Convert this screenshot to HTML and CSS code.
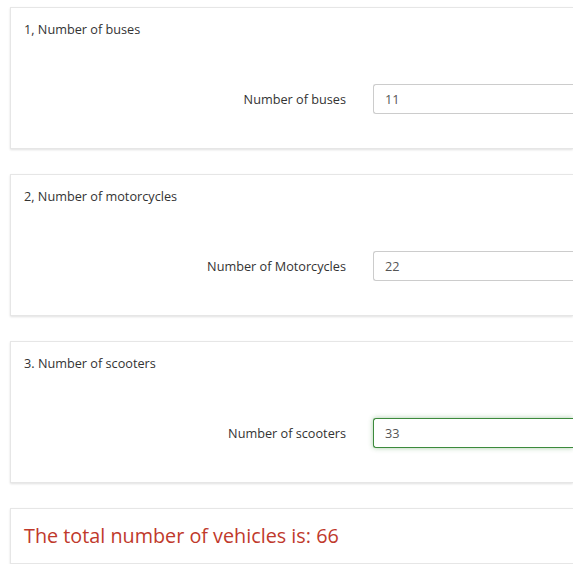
FILE: index.html
```html
<!DOCTYPE html>
<html lang="en">
<head>
  <meta charset="UTF-8" />
  <meta name="viewport" content="width=device-width, initial-scale=1.0"/>
  <title>Vehicle Count</title>
  <link rel="stylesheet" href="styles.css">
</head>
<body>
  <main class="page">
    <section class="card">
      <h4 class="card-title">1, Number of buses</h4>
      <div class="field">
        <label for="buses">Number of buses</label>
        <input id="buses" type="text" value="11" />
      </div>
    </section>

    <section class="card">
      <h4 class="card-title">2, Number of motorcycles</h4>
      <div class="field">
        <label for="motorcycles">Number of Motorcycles</label>
        <input id="motorcycles" type="text" value="22" />
      </div>
    </section>

    <section class="card">
      <h4 class="card-title">3. Number of scooters</h4>
      <div class="field">
        <label for="scooters">Number of scooters</label>
        <input id="scooters" class="valid" type="text" value="33" />
      </div>
    </section>

    <section class="card total">
      The total number of vehicles is: <span id="total">66</span>
    </section>
  </main>
</body>
</html>
```

FILE: styles.css
```css
body {
  font-family: 'Open Sans', sans-serif;
  margin: 0;
  background: #fff;
  color: #333;
}
/* cards run on past the right edge of the window */
.page {
  padding: 7px 0 0 10px;
  display: flex;
  flex-direction: column;
  gap: 25px;
}
.card {
  background: #fff;
  border: 1px solid #e6e6e6;
  border-right: none;
  box-shadow: 0 1px 2px rgba(0,0,0,0.12);
  padding: 12px 0 34px 13px;
}
.card-title {
  margin: 0;
  font-size: 12.7px;
  font-weight: normal;
  line-height: 18px;
}
.field {
  display: grid;
  grid-template-columns: 322px 1fr;
  column-gap: 27px;
  align-items: center;
  margin-top: 46px;
}
.field label {
  text-align: right;
  font-size: 12.7px;
}
.field input {
  font-family: inherit;
  font-size: 12.7px;
  color: #555;
  height: 30px;
  box-sizing: border-box;
  padding: 0 11px;
  border: 1px solid #ccc;
  border-right: none;
  border-radius: 3px 0 0 3px;
  outline: none;
  min-width: 0;
}
.field input.valid {
  border-color: #3c8a3c;
  box-shadow: 0 0 5px rgba(60,138,60,0.45);
}
.card.total {
  padding: 13px 0 13px 13px;
  font-size: 19.8px;
  line-height: 28px;
  color: #c0392b;
}
```
